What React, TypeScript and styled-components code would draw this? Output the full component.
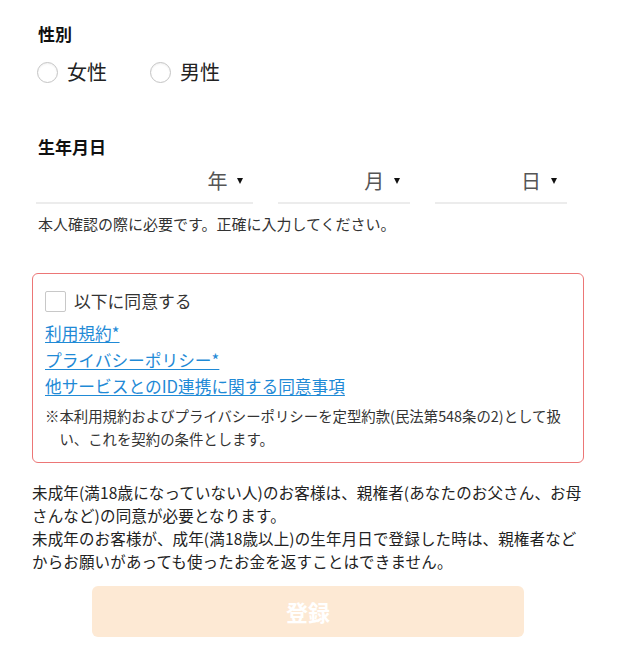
import React, {useState} from "react";
import styled, {createGlobalStyle} from "styled-components";

const GlobalStyle = createGlobalStyle`
  html, body {
    margin: 0;
    padding: 0;
    background: #ffffff;
  }
  body {
    font-family: "Noto Sans CJK JP", "Noto Sans", sans-serif;
    color: #222;
  }
`

const Page = styled.div`
  width: 640px;
  box-sizing: border-box;
  padding: 22px 56px 16px 32px;
`

const FieldGroup = styled.div`
  padding: 0 6px 0 4px;
  margin-bottom: ${props => props.$gap || 0}px;
`

const Label = styled.div`
  font-size: 17px;
  font-weight: 700;
  line-height: 24px;
  color: #111;
  padding-left: 2px;
`

const RadioRow = styled.div`
  display: flex;
  align-items: center;
  gap: 43px;
  margin-top: 11px;
  height: 30px;
  padding-left: 1px;
`

const RadioItem = styled.label`
  display: flex;
  align-items: center;
  gap: 9px;
  font-size: 20px;
  line-height: 30px;
  color: #222;
  cursor: pointer;
`

const RadioInput = styled.input`
  appearance: none;
  margin: 0;
  width: 21px;
  height: 21px;
  border-radius: 50%;
  border: 1px solid #c4c4c4;
  box-shadow: inset 0 1px 2px rgba(0, 0, 0, 0.06);
  background: #fff;

  &:checked {
    border: 6px solid #f5a35b;
  }
`

const SelectRow = styled.div`
  display: grid;
  grid-template-columns: 1.65fr 1fr 1fr;
  gap: 25px;
  margin-top: 7px;
  padding-right: 11px;
`

const SelectBox = styled.div`
  display: flex;
  justify-content: flex-end;
  align-items: center;
  gap: 10px;
  height: 28px;
  padding: 0 10px 8px 0;
  border-bottom: 2px solid #ececec;
  font-size: 20px;
  color: #555;
  cursor: pointer;

  &::after {
    content: "";
    border-left: 3px solid transparent;
    border-right: 3px solid transparent;
    border-top: 6px solid #111;
    margin-top: 2px;
  }
`

const Helper = styled.p`
  margin: 9px 0 0;
  font-size: 15px;
  line-height: 22px;
  color: #333;
  padding-left: 2px;
`

const AgreeBox = styled.div`
  border: 1.5px solid #ec7676;
  border-radius: 6px;
  padding: 16px 10px 12px 12px;
  margin-top: 38px;
`

const CheckRow = styled.label`
  display: flex;
  align-items: center;
  gap: 8px;
  font-size: 16.8px;
  line-height: 22px;
  color: #333;
  cursor: pointer;
`

const CheckInput = styled.input`
  appearance: none;
  margin: 0;
  width: 21px;
  height: 21px;
  border: 1px solid #c8c8c8;
  border-radius: 2px;
  background: #fff;

  &:checked {
    background: #f5a35b;
    border-color: #f5a35b;
  }
`

const LinkList = styled.div`
  display: flex;
  flex-direction: column;
  align-items: flex-start;
  margin-top: 8px;
`

const TermsLink = styled.a`
  font-size: 16.7px;
  line-height: 26.5px;
  color: #1f8ad6;
  text-decoration: underline;
  text-underline-offset: 2px;
`

const Note = styled.p`
  margin: 4px 0 0;
  padding-left: 1em;
  text-indent: -1em;
  font-size: 14.4px;
  line-height: 23px;
  color: #333;
`

const Notice = styled.div`
  margin-top: 18px;
  font-size: 15.5px;
  letter-spacing: 0.15px;
  line-height: 23.3px;
  color: #222;

  p {
    margin: 0;
  }
`

const SubmitButton = styled.button`
  display: block;
  width: 432px;
  height: 51px;
  margin: 12px auto 0;
  border: none;
  border-radius: 6px;
  background: ${props => (props.disabled ? "#fde9d4" : "#f5a35b")};
  color: #ffffff;
  font-family: inherit;
  font-size: 22px;
  font-weight: 700;
  cursor: ${props => (props.disabled ? "default" : "pointer")};
`

const links = [
    "利用規約*",
    "プライバシーポリシー*",
    "他サービスとのID連携に関する同意事項",
];

export default function App() {
    const [gender, setGender] = useState<string | null>(null);
    const [agreed, setAgreed] = useState(false);

    return (
        <>
            <GlobalStyle/>
            <Page>
                <FieldGroup $gap={48}>
                    <Label>性別</Label>
                    <RadioRow>
                        {["女性", "男性"].map(g => (
                            <RadioItem key={g}>
                                <RadioInput type="radio" name="gender" checked={gender === g} onChange={() => setGender(g)}/>
                                {g}
                            </RadioItem>
                        ))}
                    </RadioRow>
                </FieldGroup>

                <FieldGroup>
                    <Label>生年月日</Label>
                    <SelectRow>
                        <SelectBox>年</SelectBox>
                        <SelectBox>月</SelectBox>
                        <SelectBox>日</SelectBox>
                    </SelectRow>
                    <Helper>本人確認の際に必要です。正確に入力してください。</Helper>
                </FieldGroup>

                <AgreeBox>
                    <CheckRow>
                        <CheckInput type="checkbox" checked={agreed} onChange={e => setAgreed(e.target.checked)}/>
                        以下に同意する
                    </CheckRow>
                    <LinkList>
                        {links.map(l => <TermsLink key={l} href="#">{l}</TermsLink>)}
                    </LinkList>
                    <Note>※本利用規約およびプライバシーポリシーを定型約款(民法第548条の2)として扱い、これを契約の条件とします。</Note>
                </AgreeBox>

                <Notice>
                    <p>未成年(満18歳になっていない人)のお客様は、親権者(あなたのお父さん、お母さんなど)の同意が必要となります。</p>
                    <p>未成年のお客様が、成年(満18歳以上)の生年月日で登録した時は、親権者などからお願いがあっても使ったお金を返すことはできません。</p>
                </Notice>

                <SubmitButton type="button" disabled={!agreed || !gender}>登録</SubmitButton>
            </Page>
        </>
    )
}
